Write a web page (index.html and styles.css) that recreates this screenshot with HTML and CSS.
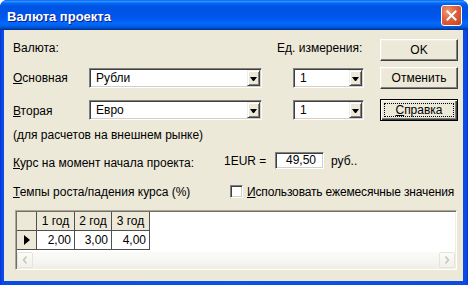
FILE: index.html
```html
<!DOCTYPE html>
<html lang="ru">
<head>
<meta charset="utf-8">
<title>Валюта проекта</title>
<link rel="stylesheet" href="styles.css">
</head>
<body>
<div class="window">
  <div class="titlebar">
    <span class="title">Валюта проекта</span>
    <span class="close"><svg width="11" height="11" viewBox="0 0 11 11"><path d="M1.5 1.5 L9.5 9.5 M9.5 1.5 L1.5 9.5" stroke="#fff" stroke-width="2" stroke-linecap="square"/></svg></span>
  </div>
  <div class="client">
    <div class="top">
      <div class="hdr">Валюта:</div>
      <div class="hdr hdr-unit">Ед. измерения:</div>
      <button class="btn btn-ok">OK</button>

      <div class="lbl"><u>О</u>сновная</div>
      <div class="combo combo-wide"><span class="val">Рубли</span><span class="arrow"></span></div>
      <div class="combo combo-narrow"><span class="val">1</span><span class="arrow"></span></div>
      <button class="btn">Отменить</button>

      <div class="lbl lbl-second"><u>В</u>торая</div>
      <div class="combo combo-wide"><span class="val">Евро</span><span class="arrow"></span></div>
      <div class="combo combo-narrow"><span class="val">1</span><span class="arrow"></span></div>
      <button class="btn btn-default"><span class="focus"><u>С</u>правка</span></button>

      <div class="note">(для расчетов на внешнем рынке)</div>
    </div>

    <div class="rate-row">
      <span class="rate-label"><u>К</u>урс на момент начала проекта:</span>
      <span class="eur">1EUR =</span>
      <span class="field">49,50</span>
      <span class="unit">руб..</span>
    </div>

    <div class="growth-row">
      <span class="growth-label"><u>Т</u>емпы роста/падения курса (%)</span>
      <span class="check"></span>
      <span class="check-label"><u>И</u>спользовать ежемесячные значения</span>
    </div>

    <div class="dbgrid">
      <div class="rows">
        <div class="row head">
          <div class="cell ind"></div>
          <div class="cell c1">1 год</div>
          <div class="cell c2">2 год</div>
          <div class="cell c3">3 год</div>
        </div>
        <div class="row data">
          <div class="cell ind"><svg width="6" height="10" viewBox="0 0 6 10"><path d="M0 0 L6 5 L0 10 Z" fill="#000"/></svg></div>
          <div class="cell c1 num">2,00</div>
          <div class="cell c2 num">3,00</div>
          <div class="cell c3 num">4,00</div>
        </div>
      </div>
      <div class="hscroll">
        <span class="sb-btn"><svg width="6" height="8" viewBox="0 0 6 8"><path d="M4.5 0.5 L1.5 4 L4.5 7.5" fill="none" stroke="#c6c4b8" stroke-width="1.5"/></svg></span>
        <span class="sb-track"></span>
        <span class="sb-btn"><svg width="6" height="8" viewBox="0 0 6 8"><path d="M1.5 0.5 L4.5 4 L1.5 7.5" fill="none" stroke="#c6c4b8" stroke-width="1.5"/></svg></span>
      </div>
    </div>
  </div>
</div>
</body>
</html>
```
FILE: styles.css
```css
* { box-sizing: border-box; }
html, body { margin: 0; padding: 0; background: #ffffff; }
body {
  width: 468px;
  height: 285px;
  overflow: hidden;
  font-family: "Liberation Sans", Arial, sans-serif;
  font-size: 12px;
  color: #000;
  white-space: nowrap;
}
u { text-decoration: underline; text-underline-offset: 1px; }

.window {
  width: 468px;
  height: 285px;
  display: flex;
  flex-direction: column;
  background: linear-gradient(to right, #0831d9 0, #0b4be3 2px, #0a52e8 50%, #0b4be3 calc(100% - 2px), #0831d9 100%);
  border-radius: 7px 7px 0 0;
  overflow: hidden;
}

.titlebar {
  height: 30px;
  flex: none;
  display: flex;
  align-items: center;
  padding: 0 6px 0 7px;
  background: linear-gradient(to bottom, #0058ee 0%, #3593ff 4%, #288eff 6%, #127dff 8%, #036ffc 10%, #0262ee 14%, #0057e5 20%, #0054e3 24%, #0055eb 56%, #005bf5 66%, #026afe 76%, #0062ef 86%, #0052d6 92%, #0040ab 96%, #003092 100%);
}
.title {
  flex: 1;
  color: #fff;
  font-weight: bold;
  font-size: 13px;
  padding-top: 3px;
  text-shadow: 1px 1px 0 #0a1e8e;
}
.close {
  width: 21px;
  height: 21px;
  margin-top: 1px;
  border: 1px solid #fff;
  border-radius: 3px;
  display: flex;
  align-items: center;
  justify-content: center;
  background: radial-gradient(circle at 30% 30%, #f09a7c 0, #e06440 40%, #c8401c 100%);
}

.client {
  flex: 1;
  margin: 0 5px 4px 4px;
  background: #ece9d8;
  padding: 9px 5px 0 9px;
}

.top {
  display: grid;
  grid-template-columns: 76px 173px 102px 94px;
  grid-template-rows: 28px 32px 22px auto;
}
.hdr { grid-row: 1; padding-top: 2px; line-height: 14px; }
.hdr:first-child { grid-column: 1 / 3; }
.hdr-unit { grid-column: 3; padding-left: 15px; }

.lbl { line-height: 20px; margin-top: 1px; }
.lbl-second { margin-top: 2px; }

.combo {
  height: 20px;
  margin-top: 1px;
  display: flex;
  background: #fff;
  border: 1px solid;
  border-color: #808080 #ffffff #ffffff #808080;
  box-shadow: inset 1px 1px 0 #404040, inset -1px -1px 0 #d4d0c8;
  padding: 1px;
}
.combo-narrow { width: 71px; justify-self: end; }
.val { flex: 1; line-height: 16px; padding-left: 5px; }
.arrow {
  width: 13px;
  flex: none;
  background: #ece9d8;
  border: 1px solid;
  border-color: #f1efe2 #404040 #404040 #f1efe2;
  box-shadow: inset 1px 1px 0 #fff, inset -1px -1px 0 #808080;
  display: flex;
  align-items: center;
  justify-content: center;
}
.arrow::after {
  content: "";
  width: 1px;
  height: 0;
  border-left: 3px solid transparent;
  border-right: 3px solid transparent;
  border-top: 4px solid #000;
  margin-top: 1px;
}

.btn {
  width: 78px;
  height: 22px;
  justify-self: end;
  padding: 0;
  margin: 0;
  font: inherit;
  color: #000;
  background: #ece9d8;
  border: 1px solid;
  border-color: #ffffff #404040 #404040 #ffffff;
  box-shadow: inset -1px -1px 0 #808080, inset 1px 1px 0 #f1efe2;
  display: flex;
  align-items: center;
  justify-content: center;
}
.btn-default {
  border-color: #000;
  box-shadow: inset 1px 1px 0 #fff, inset -1px -1px 0 #404040, inset -2px -2px 0 #808080;
  padding: 3px;
}
.focus {
  flex: 1;
  align-self: stretch;
  border: 1px dotted #000;
  display: flex;
  align-items: center;
  justify-content: center;
}

.note {
  grid-column: 1 / 4;
  padding-top: 7px;
  line-height: 14px;
}

.rate-row {
  margin-top: 10px;
  height: 17px;
  display: flex;
  align-items: center;
}
.rate-label { width: 211px; padding-top: 4px; }
.eur { width: 51px; }
.field {
  width: 49px;
  height: 17px;
  background: #fff;
  border: 1px solid;
  border-color: #808080 #ffffff #ffffff #808080;
  box-shadow: inset 1px 1px 0 #404040, inset -1px -1px 0 #d4d0c8;
  text-align: right;
  padding-right: 7px;
  line-height: 15px;
}
.unit { margin-left: 7px; }

.growth-row {
  margin-top: 15px;
  height: 15px;
  display: flex;
  align-items: center;
}
.growth-label { width: 217px; flex: none; }
.check {
  width: 13px;
  height: 13px;
  flex: none;
  background: #fff;
  border: 1px solid;
  border-color: #808080 #ffffff #ffffff #808080;
  box-shadow: inset 1px 1px 0 #404040, inset -1px -1px 0 #d4d0c8;
}
.check-label { margin-left: 4px; flex: none; letter-spacing: -0.15px; }

.dbgrid {
  margin: 11px 0 0 2px;
  width: 442px;
  height: 60px;
  background: #fff;
  border: 1px solid;
  border-color: #aca899 #ffffff #ffffff #aca899;
  box-shadow: inset 1px 1px 0 #716f64, inset -1px -1px 0 #f1efe2;
  padding: 1px;
  display: flex;
  flex-direction: column;
}
.rows { flex: 1; }
.row { display: flex; height: 19px; }
.cell {
  border-right: 1px solid #505050;
  border-bottom: 1px solid #505050;
  line-height: 18px;
}
.head .cell { background: #ece9d8; text-align: center; }
.ind {
  width: 20px;
  background: #ece9d8;
  display: flex;
  align-items: center;
  justify-content: center;
}
.c1 { width: 38px; }
.c2 { width: 37px; }
.c3 { width: 38px; }
.num { text-align: right; padding-right: 3px; }

.hscroll {
  height: 16px;
  flex: none;
  display: flex;
  background: linear-gradient(to bottom, #fbfbf9 0%, #f6f5f1 60%, #eeede6 100%);
}
.sb-btn {
  width: 16px;
  flex: none;
  border: 1px solid #e6e4da;
  border-radius: 2px;
  background: linear-gradient(to bottom, #fbfbf8, #f1f0ea);
  display: flex;
  align-items: center;
  justify-content: center;
}
.sb-track { flex: 1; }
```
